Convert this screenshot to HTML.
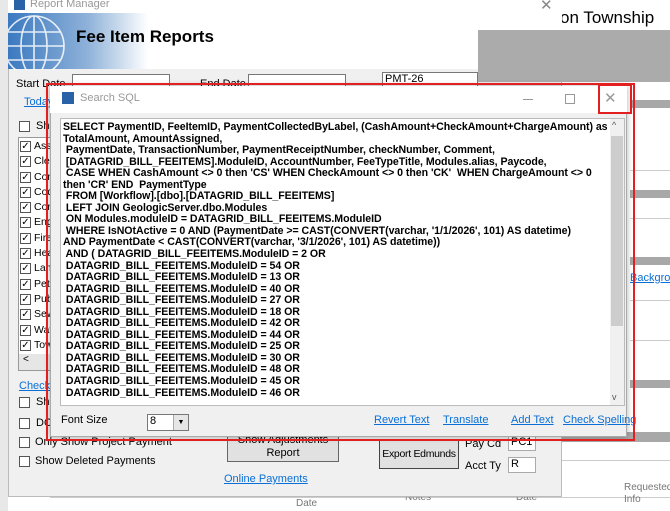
<!DOCTYPE html>
<html><head><style>
*{margin:0;padding:0;box-sizing:border-box}
body{width:670px;height:511px;overflow:hidden;background:#fff;position:relative;font-family:"Liberation Sans",sans-serif;font-size:11px;color:#000}
.a{position:absolute}
.lnk{color:#0a6fd6;text-decoration:underline}
.cb{position:absolute;width:11px;height:11px;border:1px solid #555;background:#fff;font-size:10px;line-height:9px;text-align:center}
.li{position:relative;height:15.3px;line-height:15.3px;padding-left:16px;white-space:nowrap;overflow:hidden}
.li .cb{left:2px;top:2px}
pre{font-family:"Liberation Sans",sans-serif;font-weight:bold;font-size:10.6px;line-height:11.55px;letter-spacing:-0.05px}
</style></head><body>
<!-- background app -->
<div class="a" style="left:0;top:0;width:8px;height:511px;background:#e8e8e8"></div>
<div class="a" style="left:560px;top:8px;font-size:17px">on Township</div>
<div class="a" style="left:630px;top:100px;width:40px;height:8px;background:#a8a8a8"></div>
<div class="a" style="left:630px;top:170px;width:40px;height:1px;background:#ccc"></div>
<div class="a" style="left:630px;top:190px;width:40px;height:8px;background:#a8a8a8"></div>
<div class="a" style="left:630px;top:218px;width:40px;height:1px;background:#ccc"></div>
<div class="a" style="left:630px;top:257px;width:40px;height:8px;background:#a8a8a8"></div>
<div class="a" style="left:630px;top:272px;font-size:11px" ><span class="lnk">Backgro</span></div>
<div class="a" style="left:630px;top:300px;width:40px;height:1px;background:#ccc"></div>
<div class="a" style="left:630px;top:340px;width:40px;height:1px;background:#ccc"></div>
<div class="a" style="left:630px;top:380px;width:40px;height:8px;background:#a8a8a8"></div>
<div class="a" style="left:562px;top:432px;width:108px;height:10px;background:#a8a8a8"></div>
<div class="a" style="left:562px;top:460px;width:108px;height:1px;background:#ccc"></div>
<div class="a" style="left:50px;top:497px;width:620px;height:14px;background:#fff;border-top:1px solid #ccc"></div>
<div class="a" style="left:296px;top:498px;color:#777;font-size:10px">Date</div>
<div class="a" style="left:405px;top:492px;color:#777;font-size:10px">Notes</div>
<div class="a" style="left:516px;top:492px;color:#777;font-size:10px">Date</div>
<div class="a" style="left:624px;top:482px;color:#777;font-size:10px;line-height:12px">Requested<br>Info</div>
<!-- Report Manager window -->
<div class="a" style="left:8px;top:0;width:554px;height:497px;background:#f0f0f0;border:1px solid #bbb"></div>
<div class="a" style="left:8px;top:0;width:554px;height:13px;background:#fff"></div>
<div class="a" style="left:14px;top:0;width:11px;height:10px;background:#2a62a8"></div>
<div class="a" style="left:30px;top:-2px;color:#999;font-size:11px">Report Manager</div>
<div class="a" style="left:540px;top:-4px;color:#888;font-size:15px">✕</div>
<div class="a" style="left:8px;top:13px;width:554px;height:56px;background:linear-gradient(90deg,#3b79c0 0,#8fb2d9 80px,#fff 140px,#fff)"></div>
<svg class="a" style="left:8px;top:14px" width="64" height="56" viewBox="0 0 64 56"><g fill="none" stroke="#fff" stroke-width="1.6" opacity=".85"><circle cx="26" cy="32" r="30"/><ellipse cx="26" cy="32" rx="13" ry="30"/><path d="M-4 32H56M0 18H52M0 46H52M26 2V62"/></g></svg>
<div class="a" style="left:76px;top:27px;font-size:17px;font-weight:bold">Fee Item Reports</div>
<div class="a" style="left:478px;top:30px;width:192px;height:52px;background:#ababab"></div>
<div class="a" style="left:16px;top:78px">Start Date</div>
<div class="a" style="left:72px;top:74px;width:98px;height:16px;background:#fff;border:1px solid #777"></div>
<div class="a" style="left:200px;top:78px">End Date</div>
<div class="a" style="left:248px;top:74px;width:98px;height:16px;background:#fff;border:1px solid #777"></div>
<div class="a" style="left:382px;top:72px;width:96px;height:16px;background:#fff;border:1px solid #777;padding-left:2px">PMT-26</div>
<div class="a lnk" style="left:24px;top:96px">Today</div>
<div class="cb" style="left:19px;top:121px"></div><div class="a" style="left:36px;top:120px">Show</div>
<div class="a" style="left:18px;top:137px;width:34px;height:234px;background:#fff;border:1px solid #999"></div>
<div class="a" style="left:18px;top:139px;width:34px;font-size:10.5px">
<div class="li"><span class="cb">✓</span>Asse</div>
<div class="li"><span class="cb">✓</span>Clerk</div>
<div class="li"><span class="cb">✓</span>Com</div>
<div class="li"><span class="cb">✓</span>Code</div>
<div class="li"><span class="cb">✓</span>Cons</div>
<div class="li"><span class="cb">✓</span>Engi</div>
<div class="li"><span class="cb">✓</span>Fire</div>
<div class="li"><span class="cb">✓</span>Heal</div>
<div class="li"><span class="cb">✓</span>Land</div>
<div class="li"><span class="cb">✓</span>Pet L</div>
<div class="li"><span class="cb">✓</span>Publ</div>
<div class="li"><span class="cb">✓</span>Sew</div>
<div class="li"><span class="cb">✓</span>Wate</div>
<div class="li"><span class="cb">✓</span>Tow</div>
</div>
<div class="a" style="left:19px;top:354px;width:32px;height:16px;background:#e6e6e6;font-size:10px;padding-left:4px">&lt;</div>
<div class="a lnk" style="left:19px;top:380px">Check A</div>
<div class="cb" style="left:19px;top:397px"></div><div class="a" style="left:36px;top:396px">Show</div>
<div class="cb" style="left:19px;top:418px"></div><div class="a" style="left:36px;top:417px">DO N</div>
<div class="cb" style="left:19px;top:437px"></div><div class="a" style="left:35px;top:436px">Only Show Project Payment</div>
<div class="cb" style="left:19px;top:456px"></div><div class="a" style="left:35px;top:455px">Show Deleted Payments</div>
<div class="a" style="left:227px;top:430px;width:112px;height:32px;border:1px solid #666;background:#e1e1e1;text-align:center;line-height:13px;padding-top:3px">Show Adjustments<br>Report</div>
<div class="a lnk" style="left:224px;top:473px">Online Payments</div>
<div class="a" style="left:379px;top:440px;width:80px;height:29px;border:1px solid #444;background:#e1e1e1;text-align:center;line-height:27px;white-space:nowrap;font-size:10.5px;letter-spacing:-0.3px">Export Edmunds</div>
<div class="a" style="left:465px;top:438px">Pay Cd</div>
<div class="a" style="left:508px;top:435px;width:28px;height:16px;background:#fff;border:1px solid #aaa;padding-left:2px">PC1</div>
<div class="a" style="left:465px;top:460px">Acct Ty</div>
<div class="a" style="left:508px;top:457px;width:28px;height:16px;background:#fff;border:1px solid #aaa;padding-left:2px">R</div>
<!-- Search SQL dialog -->
<div class="a" style="left:50px;top:86px;width:577px;height:351px;background:#f0f0f0;border:1px solid #aaa;box-shadow:0 0 6px rgba(0,0,0,.3)"></div>
<div class="a" style="left:50px;top:86px;width:577px;height:27px;background:#fff"></div>
<div class="a" style="left:62px;top:92px;width:12px;height:12px;background:#2a62a8"></div>
<div class="a" style="left:80px;top:92px;color:#999;font-size:11px">Search SQL</div>
<div class="a" style="left:523px;top:99px;width:10px;height:1px;background:#999"></div>
<div class="a" style="left:565px;top:94px;width:10px;height:10px;border:1px solid #999"></div>
<div class="a" style="left:604px;top:89px;color:#999;font-size:15px">✕</div>
<div class="a" style="left:60px;top:118px;width:565px;height:288px;background:#fff;border:1px solid #bbb"></div>
<div class="a" style="left:610px;top:119px;width:14px;height:286px;background:#f0f0f0"></div>
<div class="a" style="left:611px;top:136px;width:12px;height:190px;background:#cdcdcd"></div>
<div class="a" style="left:612px;top:120px;font-size:9px;color:#555">^</div>
<div class="a" style="left:612px;top:392px;font-size:9px;color:#555">v</div>
<pre class="a" style="left:63px;top:122px">SELECT PaymentID, FeeItemID, PaymentCollectedByLabel, (CashAmount+CheckAmount+ChargeAmount) as
TotalAmount, AmountAssigned,
 PaymentDate, TransactionNumber, PaymentReceiptNumber, checkNumber, Comment,
 [DATAGRID_BILL_FEEITEMS].ModuleID, AccountNumber, FeeTypeTitle, Modules.alias, Paycode,
 CASE WHEN CashAmount &lt;&gt; 0 then 'CS' WHEN CheckAmount &lt;&gt; 0 then 'CK'  WHEN ChargeAmount &lt;&gt; 0
then 'CR' END  PaymentType
 FROM [Workflow].[dbo].[DATAGRID_BILL_FEEITEMS]
 LEFT JOIN GeologicServer.dbo.Modules
 ON Modules.moduleID = DATAGRID_BILL_FEEITEMS.ModuleID
 WHERE IsNOtActive = 0 AND (PaymentDate &gt;= CAST(CONVERT(varchar, '1/1/2026', 101) AS datetime)
AND PaymentDate &lt; CAST(CONVERT(varchar, '3/1/2026', 101) AS datetime))
 AND ( DATAGRID_BILL_FEEITEMS.ModuleID = 2 OR
 DATAGRID_BILL_FEEITEMS.ModuleID = 54 OR
 DATAGRID_BILL_FEEITEMS.ModuleID = 13 OR
 DATAGRID_BILL_FEEITEMS.ModuleID = 40 OR
 DATAGRID_BILL_FEEITEMS.ModuleID = 27 OR
 DATAGRID_BILL_FEEITEMS.ModuleID = 18 OR
 DATAGRID_BILL_FEEITEMS.ModuleID = 42 OR
 DATAGRID_BILL_FEEITEMS.ModuleID = 44 OR
 DATAGRID_BILL_FEEITEMS.ModuleID = 25 OR
 DATAGRID_BILL_FEEITEMS.ModuleID = 30 OR
 DATAGRID_BILL_FEEITEMS.ModuleID = 48 OR
 DATAGRID_BILL_FEEITEMS.ModuleID = 45 OR
 DATAGRID_BILL_FEEITEMS.ModuleID = 46 OR</pre>
<div class="a" style="left:61px;top:414px">Font Size</div>
<div class="a" style="left:147px;top:414px;width:42px;height:17px;background:#fff;border:1px solid #777;padding-left:2px">8</div>
<div class="a" style="left:173px;top:415px;width:15px;height:15px;background:#e6e6e6;border-left:1px solid #aaa;font-size:7px;text-align:center;line-height:15px">▼</div>
<div class="a lnk" style="left:374px;top:414px">Revert Text</div>
<div class="a lnk" style="left:443px;top:414px">Translate</div>
<div class="a lnk" style="left:511px;top:414px">Add Text</div>
<div class="a lnk" style="left:563px;top:414px">Check Spelling</div>
<!-- red outlines -->
<div class="a" style="left:46px;top:83px;width:589px;height:358px;border:2px solid #e32020"></div>
<div class="a" style="left:598px;top:84px;width:34px;height:30px;border:2px solid #e32020"></div>
</body></html>
